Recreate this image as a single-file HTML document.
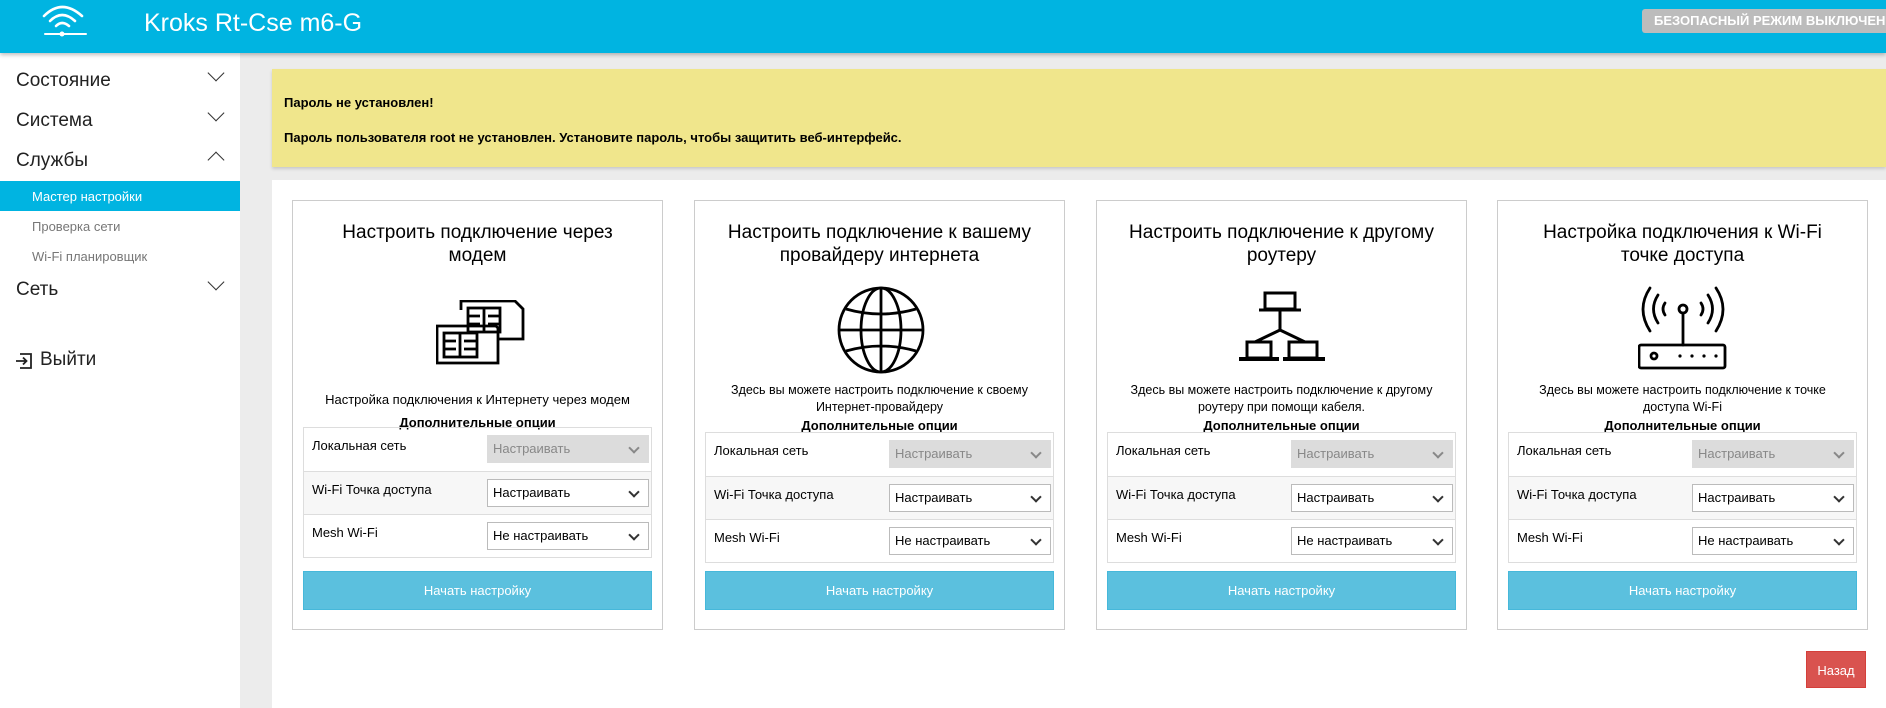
<!DOCTYPE html>
<html><head><meta charset="utf-8"><style>
*{box-sizing:border-box;margin:0;padding:0}
body{width:1886px;height:708px;overflow:hidden;background:#ececec;font-family:"Liberation Sans","DejaVu Sans",sans-serif;position:relative;color:#000}
.hdr{position:absolute;left:0;top:0;width:1886px;height:53px;background:#00b4e1;box-shadow:0 2px 4px rgba(0,0,0,.25);z-index:2}
.title{position:absolute;left:144px;top:9px;color:#fff;font-size:25px}
.safe{position:absolute;left:1642px;top:9px;width:260px;height:24px;background:#bcbcbc;border-radius:3px;color:#fff;font-weight:bold;font-size:13px;line-height:24px;padding-left:12px;white-space:nowrap}
.side{position:absolute;left:0;top:53px;width:240px;height:655px;background:#fff}
.mi{position:absolute;left:16px;font-size:19px;color:#222}
.chev{position:absolute;left:210px;width:12px;height:12px;border-right:1.6px solid #333;border-bottom:1.6px solid #333;transform:rotate(45deg)}
.chev.up{transform:rotate(225deg)}
.sub{position:absolute;left:32px;font-size:13px;color:#777}
.act{position:absolute;left:0;top:128px;width:240px;height:30px;background:#00b4e1}
.warn{position:absolute;left:272px;top:69px;width:1614px;height:98px;background:#f0e68c;box-shadow:0 2px 3px rgba(0,0,0,.15);font-weight:bold;font-size:13px}
.main{position:absolute;left:272px;top:180px;width:1614px;height:528px;background:#fff}
.card{position:absolute;top:200px;width:371px;height:430px;border:1px solid #ccc;background:#fff;text-align:center}
.ct{position:absolute;left:0;right:0;top:20px;font-size:19px;line-height:23px;padding:0 20px}
.desc{position:absolute;left:0;right:0;font-size:12.5px;line-height:17px}
.dop{position:absolute;left:0;right:0;font-size:13px;font-weight:bold}
.tbl{position:absolute;left:10px;right:10px;border:1px solid #ddd;text-align:left}
.row{height:43px;border-top:1px solid #ddd;position:relative;font-size:13px}
.row:first-child{border-top:none}
.row:nth-child(2){background:#f7f7f7}
.row span{position:absolute;left:8px;top:10px}
.sel{position:absolute;left:183px;top:7px;width:162px;height:28px;border:1px solid #bbb;background:#fff;font-size:13px;line-height:26px;padding-left:5px}
.sel.dis{background:#dcdcdc;border-color:#dcdcdc;color:#888}
.sel:after{content:"";position:absolute;right:10px;top:8px;width:6px;height:6px;border-right:2px solid #333;border-bottom:2px solid #333;transform:rotate(45deg)}
.sel.dis:after{border-color:#888}
.btn{position:absolute;left:10px;right:10px;top:370px;height:39px;background:#5bc0de;border:1px solid #46b8da;color:#fff;font-size:13px;line-height:37px}
.back{position:absolute;left:1806px;top:651px;width:60px;height:37px;background:#d9534f;color:#fff;font-size:13px;line-height:37px;text-align:center;border:1px solid #d43f3a}
</style></head><body>
<div class="hdr">
<svg style="position:absolute;left:40px;top:2px" width="50" height="36" viewBox="0 0 50 36" fill="none" stroke="#fff" stroke-width="2.6" stroke-linecap="round">
<path d="M4 14 Q22 -4 42 14"/><path d="M10 19 Q22 7 35 19"/><path d="M16 24 Q22 18 29 24"/>
<line x1="5" y1="32" x2="46" y2="32" stroke-width="2"/><circle cx="22" cy="32" r="2.5" fill="#fff" stroke="none"/></svg>
<div class="title">Kroks Rt-Cse m6-G</div>
<div class="safe">БЕЗОПАСНЫЙ РЕЖИМ ВЫКЛЮЧЕН</div>
</div>
<div class="side">
<div class="mi" style="top:17px">Состояние</div><div class="chev" style="top:14px"></div>
<div class="mi" style="top:57px">Система</div><div class="chev" style="top:54px"></div>
<div class="mi" style="top:97px">Службы</div><div class="chev up" style="top:101px"></div>
<div class="act"></div>
<div class="sub" style="top:136px;color:#fff">Мастер настройки</div>
<div class="sub" style="top:166px">Проверка сети</div>
<div class="sub" style="top:196px">Wi-Fi планировщик</div>
<div class="mi" style="top:226px">Сеть</div><div class="chev" style="top:223px"></div>
<svg style="position:absolute;left:14px;top:298px" width="20" height="20" viewBox="0 0 20 20" fill="none" stroke="#222" stroke-width="1.8"><path d="M6 3 H17 V17 H6"/><path d="M2 10 H12 M9 6.5 L12.5 10 L9 13.5"/></svg>
<div class="mi" style="top:296px;left:40px">Выйти</div>
</div>
<div class="warn"><div style="position:absolute;left:12px;top:26px">Пароль не установлен!</div><div style="position:absolute;left:12px;top:61px">Пароль пользователя root не установлен. Установите пароль, чтобы защитить веб-интерфейс.</div></div>
<div class="main"></div>

<div class="card" style="left:292px">
<div class="ct">Настроить подключение через модем</div>
<svg style="position:absolute;left:143px;top:99px" width="90" height="66" viewBox="0 0 90 66" fill="none" stroke="#000" stroke-width="2.8">
<path d="M25 10 V1 H79 L87 9 V39 H61"/><rect x="32" y="8" width="32" height="24"/><path d="M48 8 V32 M32 16 H44 M32 24 H44 M52 16 H64 M52 24 H64"/>
<path d="M1 26 H60 L62 28 V63 H1 Z"/><rect x="8" y="33" width="33" height="24"/><path d="M24 33 V57 M8 41 H20 M8 49 H20 M28 41 H41 M28 49 H41"/></svg>
<div class="desc" style="top:190px;font-size:13px">Настройка подключения к Интернету через модем</div>
<div class="dop" style="top:214px">Дополнительные опции</div>
<div class="tbl" style="top:226px">
<div class="row"><span>Локальная сеть</span><div class="sel dis">Настраивать</div></div>
<div class="row"><span>Wi-Fi Точка доступа</span><div class="sel">Настраивать</div></div>
<div class="row"><span>Mesh Wi-Fi</span><div class="sel">Не настраивать</div></div>
</div>
<div class="btn">Начать настройку</div>
</div>

<div class="card" style="left:694px">
<div class="ct">Настроить подключение к вашему провайдеру интернета</div>
<svg style="position:absolute;left:141px;top:84px" width="90" height="90" viewBox="0 0 90 90" fill="none" stroke="#000" stroke-width="2.8">
<circle cx="45" cy="45" r="42"/><ellipse cx="45" cy="45" rx="20" ry="42"/><path d="M45 3 V87 M3 45 H87 M10 24 Q45 34 80 24 M10 66 Q45 56 80 66"/></svg>
<div class="desc" style="top:181px">Здесь вы можете настроить подключение к своему<br>Интернет-провайдеру</div>
<div class="dop" style="top:217px">Дополнительные опции</div>
<div class="tbl" style="top:231px">
<div class="row"><span>Локальная сеть</span><div class="sel dis">Настраивать</div></div>
<div class="row"><span>Wi-Fi Точка доступа</span><div class="sel">Настраивать</div></div>
<div class="row"><span>Mesh Wi-Fi</span><div class="sel">Не настраивать</div></div>
</div>
<div class="btn">Начать настройку</div>
</div>

<div class="card" style="left:1096px">
<div class="ct">Настроить подключение к другому роутеру</div>
<svg style="position:absolute;left:140px;top:89px" width="90" height="76" viewBox="0 0 90 76" fill="none" stroke="#000" stroke-width="3">
<rect x="28" y="3" width="30" height="16"/><path d="M22 20 H64 M43 20 V40 L18 52 M43 40 L68 52"/>
<rect x="10" y="52" width="24" height="16"/><rect x="52" y="52" width="28" height="16"/><path d="M2 69 H42 M46 69 H88" stroke-width="4"/></svg>
<div class="desc" style="top:181px">Здесь вы можете настроить подключение к другому<br>роутеру при помощи кабеля.</div>
<div class="dop" style="top:217px">Дополнительные опции</div>
<div class="tbl" style="top:231px">
<div class="row"><span>Локальная сеть</span><div class="sel dis">Настраивать</div></div>
<div class="row"><span>Wi-Fi Точка доступа</span><div class="sel">Настраивать</div></div>
<div class="row"><span>Mesh Wi-Fi</span><div class="sel">Не настраивать</div></div>
</div>
<div class="btn">Начать настройку</div>
</div>

<div class="card" style="left:1497px">
<div class="ct">Настройка подключения к Wi-Fi точке доступа</div>
<svg style="position:absolute;left:140px;top:85px" width="90" height="84" viewBox="0 0 90 84" fill="none" stroke="#000" stroke-width="2.8" stroke-linecap="round">
<path d="M12 2 Q-2 23 12 45 M78 2 Q92 23 78 45 M20 9 Q11 23 20 37 M70 9 Q79 23 70 37 M27 17 Q23 23 27 29 M63 17 Q67 23 63 29"/>
<circle cx="45" cy="23" r="4"/><path d="M45 27 V59"/><rect x="1" y="59" width="86" height="23" rx="2"/>
<circle cx="16" cy="70" r="3"/><g fill="#000" stroke="none"><circle cx="42" cy="70" r="1.6"/><circle cx="54" cy="70" r="1.6"/><circle cx="66" cy="70" r="1.6"/><circle cx="78" cy="70" r="1.6"/></g></svg>
<div class="desc" style="top:181px">Здесь вы можете настроить подключение к точке<br>доступа Wi-Fi</div>
<div class="dop" style="top:217px">Дополнительные опции</div>
<div class="tbl" style="top:231px">
<div class="row"><span>Локальная сеть</span><div class="sel dis">Настраивать</div></div>
<div class="row"><span>Wi-Fi Точка доступа</span><div class="sel">Настраивать</div></div>
<div class="row"><span>Mesh Wi-Fi</span><div class="sel">Не настраивать</div></div>
</div>
<div class="btn">Начать настройку</div>
</div>

<div class="back">Назад</div>
</body></html>
